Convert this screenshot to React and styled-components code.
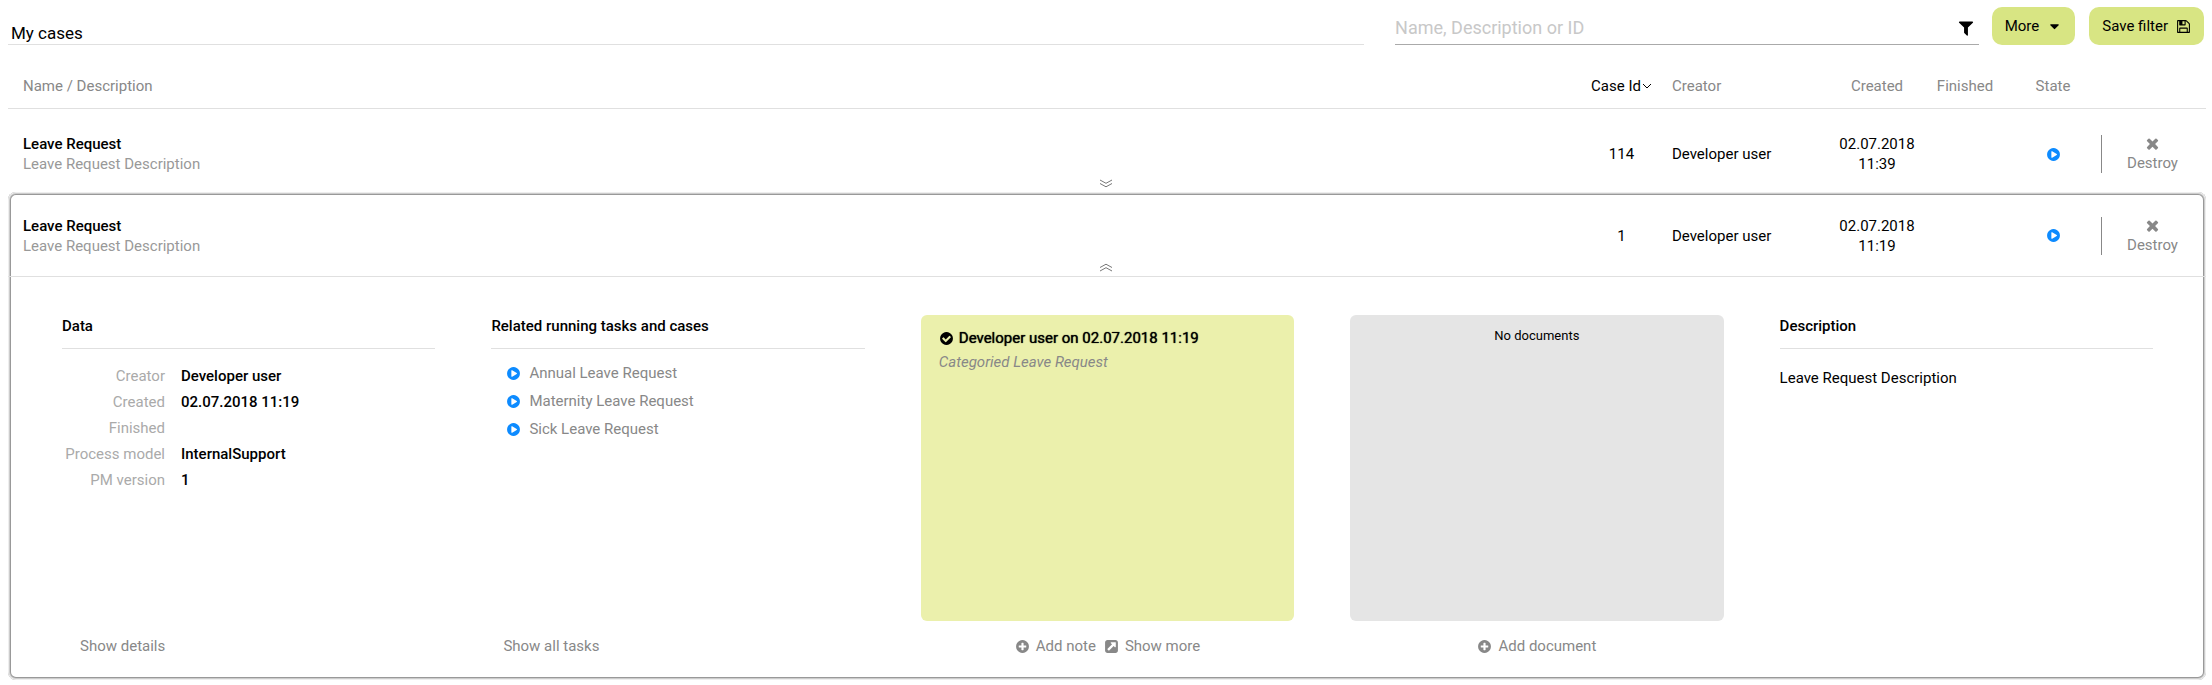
import React from "react";
import styled, { createGlobalStyle } from "styled-components";

const DISC =
  "q0 209-103 385.5t-279.5 279.5-385.5 103-385.5-103-279.5-279.5-103-385.5 103-385.5 279.5-279.5 385.5-103 385.5 103 279.5 279.5 103 385.5z";

const ICONS = {
  play: "M896 128q209 0 385.5 103t279.5 279.5 103 385.5-103 385.5-279.5 279.5-385.5 103-385.5-103-279.5-279.5-103-385.5 103-385.5 279.5-279.5 385.5-103zm384 823q32-18 32-55t-32-55l-544-320q-31-19-64-1-32 19-32 56v640q0 37 32 56 16 8 32 8 17 0 32-9z",
  times:
    "M1490 1322q0 40-28 68l-136 136q-28 28-68 28t-68-28l-294-294-294 294q-28 28-68 28t-68-28l-136-136q-28-28-28-68t28-68l294-294-294-294q-28-28-28-68t28-68l136-136q28-28 68-28t68 28l294 294 294-294q28-28 68-28t68 28l136 136q28 28 28 68t-28 68l-294 294 294 294q28 28 28 68z",
  plus:
    "M1344 960v-128q0-26-19-45t-45-19h-256v-256q0-26-19-45t-45-19h-128q-26 0-45 19t-19 45v256h-256q-26 0-45 19t-19 45v128q0 26 19 45t45 19h256v256q0 26 19 45t45 19h128q26 0 45-19t19-45v-256h256q26 0 45-19t19-45zm320-64" +
    DISC,
  check:
    "M1412 734q0-28-18-46l-91-90q-19-19-45-19t-45 19l-408 407-226-226q-19-19-45-19t-45 19l-91 90q-18 18-18 46 0 27 18 45l362 362q19 19 45 19 27 0 46-19l543-543q18-18 18-45zm252 162" +
    DISC,
  external:
    "M1408 928v-480q0-26-19-45t-45-19h-480q-42 0-59 39-17 41 14 70l144 144-534 534q-19 19-19 45t19 45l102 102q19 19 45 19t45-19l534-534 144 144q18 19 45 19 12 0 25-5 39-17 39-59zm256-512v960q0 119-84.5 203.5t-203.5 84.5h-960q-119 0-203.5-84.5t-84.5-203.5v-960q0-119 84.5-203.5t203.5-84.5h960q119 0 203.5 84.5t84.5 203.5z",
  filter:
    "M1595 295q17 41-14 70l-493 493v742q0 42-39 59-13 5-25 5-27 0-45-19l-256-256q-19-19-19-45v-486l-493-493q-31-29-14-70 17-39 59-39h1280q42 0 59 39z",
  floppy:
    "M512 1536h768v-384h-768v384zm896 0h128v-896q0-14-10-38.5t-20-34.5l-281-281q-10-10-34-20t-39-10v416q0 40-28 68t-68 28h-576q-40 0-68-28t-28-68v-416h-128v1280h128v-416q0-40 28-68t68-28h832q40 0 68 28t28 68v416zm-384-928v-320q0-13-9.5-22.5t-22.5-9.5h-192q-13 0-22.5 9.5t-9.5 22.5v320q0 13 9.5 22.5t22.5 9.5h192q13 0 22.5-9.5t9.5-22.5zm640 32v928q0 40-28 68t-68 28h-1344q-40 0-68-28t-28-68v-1344q0-40 28-68t68-28h928q40 0 88 20t76 48l280 280q28 28 48 76t20 88z",
  caret:
    "M1408 704q0 26-19 45l-448 448q-19 19-45 19t-45-19l-448-448q-19-19-19-45t19-45 45-19h896q26 0 45 19t19 45z",
};

const Svg = styled.svg`
  display: block;
  flex: none;
  width: ${(p) => p.$size}px;
  height: ${(p) => p.$size}px;
  fill: currentColor;
`;

const Icon = ({ name, size = 15 }) => (
  <Svg viewBox="0 0 1792 1792" $size={size} aria-hidden="true">
    <path d={ICONS[name]} />
  </Svg>
);

const Stroke = styled.svg`
  display: block;
  flex: none;
  fill: none;
  stroke: currentColor;
`;

const Global = createGlobalStyle`
  *, *::before, *::after { box-sizing: border-box; }
  body {
    margin: 0;
    background: #fff;
    color: #000;
    font: 400 15px/20px Roboto, "Liberation Sans", sans-serif;
  }
  button, input { font: inherit; color: inherit; }
  a { color: inherit; text-decoration: none; }
`;

const Page = styled.main`
  padding: 7px 6px 5px 8px;
`;

const Toolbar = styled.header`
  display: flex;
  align-items: stretch;
  height: 38px;
  margin-right: 2px;
`;

const Title = styled.h1`
  flex: 1358;
  display: flex;
  align-items: flex-end;
  margin: 0 31px 0 0;
  padding: 0 3px;
  border-bottom: 1px solid #e0e0e0;
  font-size: 17px;
  font-weight: 400;
  line-height: 22px;
`;

const Search = styled.label`
  flex: 583;
  display: flex;
  align-items: center;
  gap: 8px;
  margin-right: 13px;
  padding: 5px 4px 0 0;
  border-bottom: 1px solid #aaa;
`;

const SearchInput = styled.input`
  flex: 1;
  min-width: 0;
  padding: 0;
  border: 0;
  outline: 0;
  background: none;
  font-size: 18px;
  &::placeholder {
    color: #c8c8c8;
    opacity: 1;
  }
`;

const GreenButton = styled.button`
  display: flex;
  align-items: center;
  gap: 8px;
  padding: 0 13px;
  border: 0;
  border-radius: 10px;
  background: #d8e583;
  white-space: nowrap;
  & + & {
    margin-left: 14px;
  }
`;

const Table = styled.table`
  width: 100%;
  margin-top: 18px;
  border-collapse: separate;
  border-spacing: 0;
  table-layout: fixed;
`;

const Col = styled.col`
  width: ${(p) => (p.$w ? `${p.$w}px` : "auto")};
`;

const Head = styled.th`
  height: 46px;
  padding: ${(p) => (p.$first ? "0 0 0 15px" : "0")};
  border-bottom: 1px solid #e0e0e0;
  color: ${(p) => (p.$active ? "#000" : "#888")};
  font-weight: 400;
  text-align: ${(p) => p.$align || "center"};
  white-space: nowrap;
`;

const SortButton = styled.button`
  display: flex;
  align-items: center;
  justify-content: center;
  gap: 1px;
  width: 100%;
  padding: 0;
  border: 0;
  background: none;
`;

const Group = styled.tbody`
  ${(p) =>
    p.$open &&
    `
    border-radius: 8px;
    box-shadow: inset 0 0 0 1px #eee, inset 0 0 0 2px #ccc, inset 0 0 0 3px #999;
  `}
`;

const Cell = styled.td`
  height: ${(p) => (p.$open ? 85 : 83)}px;
  padding: ${(p) => (p.$open ? 3 : 7)}px 0 0;
  text-align: ${(p) => p.$align || "center"};
  vertical-align: middle;
  border-bottom: ${(p) => (p.$open ? "1px solid #e0e0e0" : 0)};
`;

const NameCell = styled(Cell)`
  position: relative;
  padding-left: 15px;
`;

const CaseName = styled.div`
  font-weight: 500;
`;

const Muted = styled.div`
  color: #999;
`;

const Toggle = styled.button`
  position: absolute;
  left: calc(50vw - 15px);
  bottom: 4px;
  padding: 0;
  border: 0;
  background: none;
  color: #777;
`;

const StateIcon = styled.span`
  display: flex;
  justify-content: center;
  color: #0d8bff;
`;

const DestroyButton = styled.button`
  display: flex;
  flex-direction: column;
  align-items: center;
  justify-content: space-between;
  width: 100%;
  height: 38px;
  padding: 0 3px 0 0;
  border: 0;
  border-left: 1px solid #888;
  background: none;
  color: #888;
`;

const Panel = styled.td`
  height: 403px;
  padding: 38px 53px 20px 54px;
  vertical-align: top;
`;

const Columns = styled.div`
  display: grid;
  grid-template-columns: repeat(5, minmax(0, 1fr));
  gap: 56px;
`;

const Column = styled.section`
  display: flex;
  flex-direction: column;
  height: 341px;
`;

const ColumnTitle = styled.h2`
  margin: 0;
  padding: 1px 0 12px;
  border-bottom: 1px solid #e0e0e0;
  font-size: 15px;
  font-weight: 500;
  line-height: 20px;
`;

const DataList = styled.dl`
  display: grid;
  grid-template-columns: 103px 1fr;
  column-gap: 16px;
  row-gap: 6px;
  margin: 17px 0 0;
  dt {
    color: #aaa;
    text-align: right;
  }
  dd {
    margin: 0;
    font-weight: 500;
  }
`;

const TaskList = styled.ul`
  display: grid;
  gap: 8px;
  margin: 14px 0 0;
  padding: 0 0 0 15px;
  list-style: none;
`;

const TaskLink = styled.a`
  display: flex;
  align-items: center;
  gap: 8px;
  color: #888;
`;

const Description = styled.p`
  margin: 19px 0 0;
`;

const Box = styled.div`
  height: 306px;
  padding: ${(p) => (p.$doc ? "11px 18px" : "13px 18px")};
  border-radius: 6px;
  background: ${(p) => (p.$doc ? "#e5e5e5" : "#ebf0ac")};
`;

const Note = styled.div`
  display: flex;
  align-items: center;
  gap: 5px;
  text-shadow: 0 0 1px currentColor;
`;

const NoteText = styled.div`
  margin-top: 4px;
  color: #888;
  font-style: italic;
`;

const Empty = styled.div`
  font-size: 13px;
  text-align: center;
`;

const Actions = styled.div`
  display: flex;
  justify-content: ${(p) => (p.$center ? "center" : "flex-start")};
  gap: 8px;
  margin-top: auto;
  padding-left: ${(p) => p.$indent || 0}px;
`;

const Action = styled.a`
  display: flex;
  align-items: center;
  gap: 6px;
  color: #888;
`;

const cases = [
  { id: 114, date: "02.07.2018", time: "11:39", open: false },
  { id: 1, date: "02.07.2018", time: "11:19", open: true },
];

const CaseRow = ({ item }) => (
  <tr>
    <NameCell $open={item.open} $align="left">
      <CaseName>Leave Request</CaseName>
      <Muted>Leave Request Description</Muted>
      <Toggle type="button" aria-label={item.open ? "Collapse" : "Expand"} aria-expanded={item.open}>
        <Stroke width="14" height="9" viewBox="0 0 14 9" aria-hidden="true">
          <path d={item.open ? "M1 4.5 7 1.2l6 3.3M1 8l6-3.3L13 8" : "M1 1l6 3.3L13 1M1 4.5l6 3.3 6-3.3"} />
        </Stroke>
      </Toggle>
    </NameCell>
    <Cell $open={item.open}>{item.id}</Cell>
    <Cell $open={item.open} $align="left">Developer user</Cell>
    <Cell $open={item.open}>
      {item.date}
      <br />
      {item.time}
    </Cell>
    <Cell $open={item.open} />
    <Cell $open={item.open}>
      <StateIcon role="img" aria-label="Running">
        <Icon name="play" />
      </StateIcon>
    </Cell>
    <Cell $open={item.open}>
      <DestroyButton type="button">
        <Icon name="times" size={17} />
        Destroy
      </DestroyButton>
    </Cell>
  </tr>
);

export default function App() {
  return (
    <Page>
      <Global />
      <Toolbar>
        <Title>My cases</Title>
        <Search>
          <SearchInput type="text" aria-label="Search cases" placeholder="Name, Description or ID" />
          <Icon name="filter" size={18} />
        </Search>
        <GreenButton type="button">
          More
          <Icon name="caret" />
        </GreenButton>
        <GreenButton type="button">
          Save filter
          <Icon name="floppy" />
        </GreenButton>
      </Toolbar>
      <Table>
        <colgroup>
          <Col />
          <Col $w={101} />
          <Col $w={157} />
          <Col $w={96} />
          <Col $w={80} />
          <Col $w={96} />
          <Col $w={105} />
        </colgroup>
        <thead>
          <tr>
            <Head $first $align="left">Name / Description</Head>
            <Head $active aria-sort="descending">
              <SortButton type="button">
                Case Id
                <Stroke width="10" height="6" viewBox="0 0 10 6" aria-hidden="true">
                  <path d="M1 1 5 5 9 1" />
                </Stroke>
              </SortButton>
            </Head>
            <Head $align="left">Creator</Head>
            <Head>Created</Head>
            <Head>Finished</Head>
            <Head>State</Head>
            <Head />
          </tr>
        </thead>
        <Group>
          <CaseRow item={cases[0]} />
        </Group>
        <Group $open>
          <CaseRow item={cases[1]} />
          <tr>
            <Panel colSpan={7}>
              <Columns>
                <Column>
                  <ColumnTitle>Data</ColumnTitle>
                  <DataList>
                    <dt>Creator</dt>
                    <dd>Developer user</dd>
                    <dt>Created</dt>
                    <dd>02.07.2018 11:19</dd>
                    <dt>Finished</dt>
                    <dd />
                    <dt>Process model</dt>
                    <dd>InternalSupport</dd>
                    <dt>PM version</dt>
                    <dd>1</dd>
                  </DataList>
                  <Actions $indent={18}>
                    <Action href="#details">Show details</Action>
                  </Actions>
                </Column>
                <Column>
                  <ColumnTitle>Related running tasks and cases</ColumnTitle>
                  <TaskList>
                    {["Annual", "Maternity", "Sick"].map((kind) => (
                      <li key={kind}>
                        <TaskLink href={`#${kind}`}>
                          <StateIcon>
                            <Icon name="play" />
                          </StateIcon>
                          {`${kind} Leave Request`}
                        </TaskLink>
                      </li>
                    ))}
                  </TaskList>
                  <Actions $indent={12}>
                    <Action href="#tasks">Show all tasks</Action>
                  </Actions>
                </Column>
                <Column>
                  <Box>
                    <Note>
                      <Icon name="check" />
                      Developer user on 02.07.2018 11:19
                    </Note>
                    <NoteText>Categoried Leave Request</NoteText>
                  </Box>
                  <Actions $center>
                    <Action href="#add-note">
                      <Icon name="plus" />
                      Add note
                    </Action>
                    <Action href="#more">
                      <Icon name="external" />
                      Show more
                    </Action>
                  </Actions>
                </Column>
                <Column>
                  <Box $doc>
                    <Empty>No documents</Empty>
                  </Box>
                  <Actions $center>
                    <Action href="#add-document">
                      <Icon name="plus" />
                      Add document
                    </Action>
                  </Actions>
                </Column>
                <Column>
                  <ColumnTitle>Description</ColumnTitle>
                  <Description>Leave Request Description</Description>
                </Column>
              </Columns>
            </Panel>
          </tr>
        </Group>
      </Table>
    </Page>
  );
}
